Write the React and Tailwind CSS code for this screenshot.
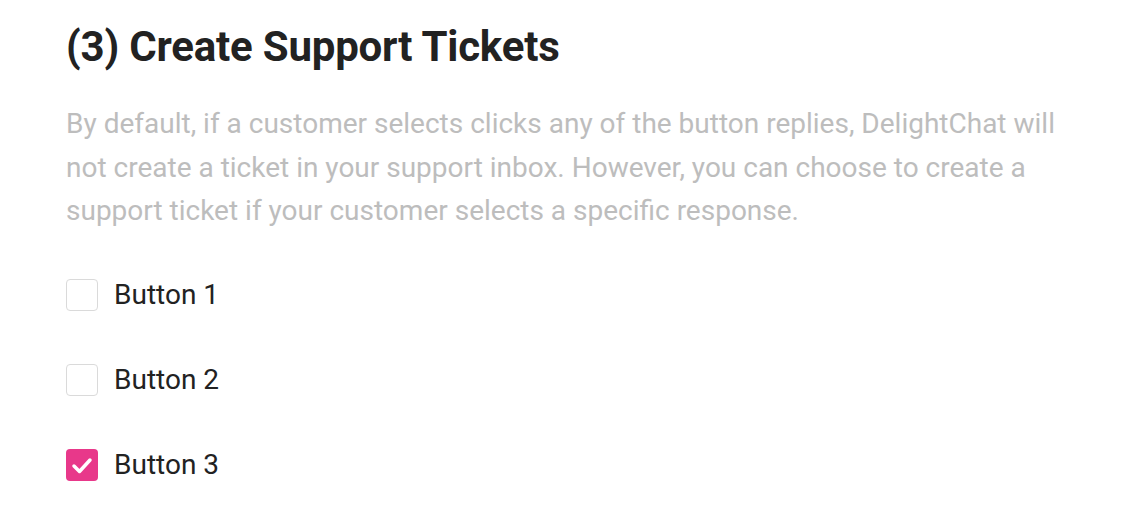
import React, { useState } from "react";

const Checkbox = ({ checked, onChange, label }) => (
  <label className="flex items-center gap-4 cursor-pointer select-none">
    <span
      onClick={onChange}
      className={
        checked
          ? "flex h-8 w-8 items-center justify-center rounded-[4px] bg-[#e8388a]"
          : "flex h-8 w-8 items-center justify-center rounded-[4px] border-[1.5px] border-[#dadada] bg-white"
      }
    >
      {checked && (
        <svg width="32" height="32" viewBox="0 0 32 32" fill="none">
          <path d="M8 17l5.5 5.5L24 11" stroke="white" strokeWidth="3.5" strokeLinecap="round" strokeLinejoin="round" />
        </svg>
      )}
    </span>
    <span className="text-[28px] leading-8 text-[#222]">{label}</span>
  </label>
);

const App = () => {
  const [checked, setChecked] = useState([false, false, true]);

  const toggle = (i) => {
    setChecked(checked.map((c, j) => (j === i ? !c : c)));
  };

  return (
    <div className="min-h-screen bg-white px-[66px] pt-[21px] font-['Roboto',sans-serif]">
      <h2 className="text-[42px] font-bold leading-[52px] tracking-[-0.2px] text-[#222]">
        (3) Create Support Tickets
      </h2>

      <p className="mt-[29px] max-w-[1000px] text-[28px] leading-[43.5px] text-[#bdbdbd]">
        By default, if a customer selects clicks any of the button replies, DelightChat will
        not create a ticket in your support inbox. However, you can choose to create a
        support ticket if your customer selects a specific response.
      </p>

      <div className="mt-[46px] flex flex-col gap-[53px]">
        {["Button 1", "Button 2", "Button 3"].map((label, i) => (
          <Checkbox key={label} label={label} checked={checked[i]} onChange={() => toggle(i)} />
        ))}
      </div>
    </div>
  );
};

export default App;
